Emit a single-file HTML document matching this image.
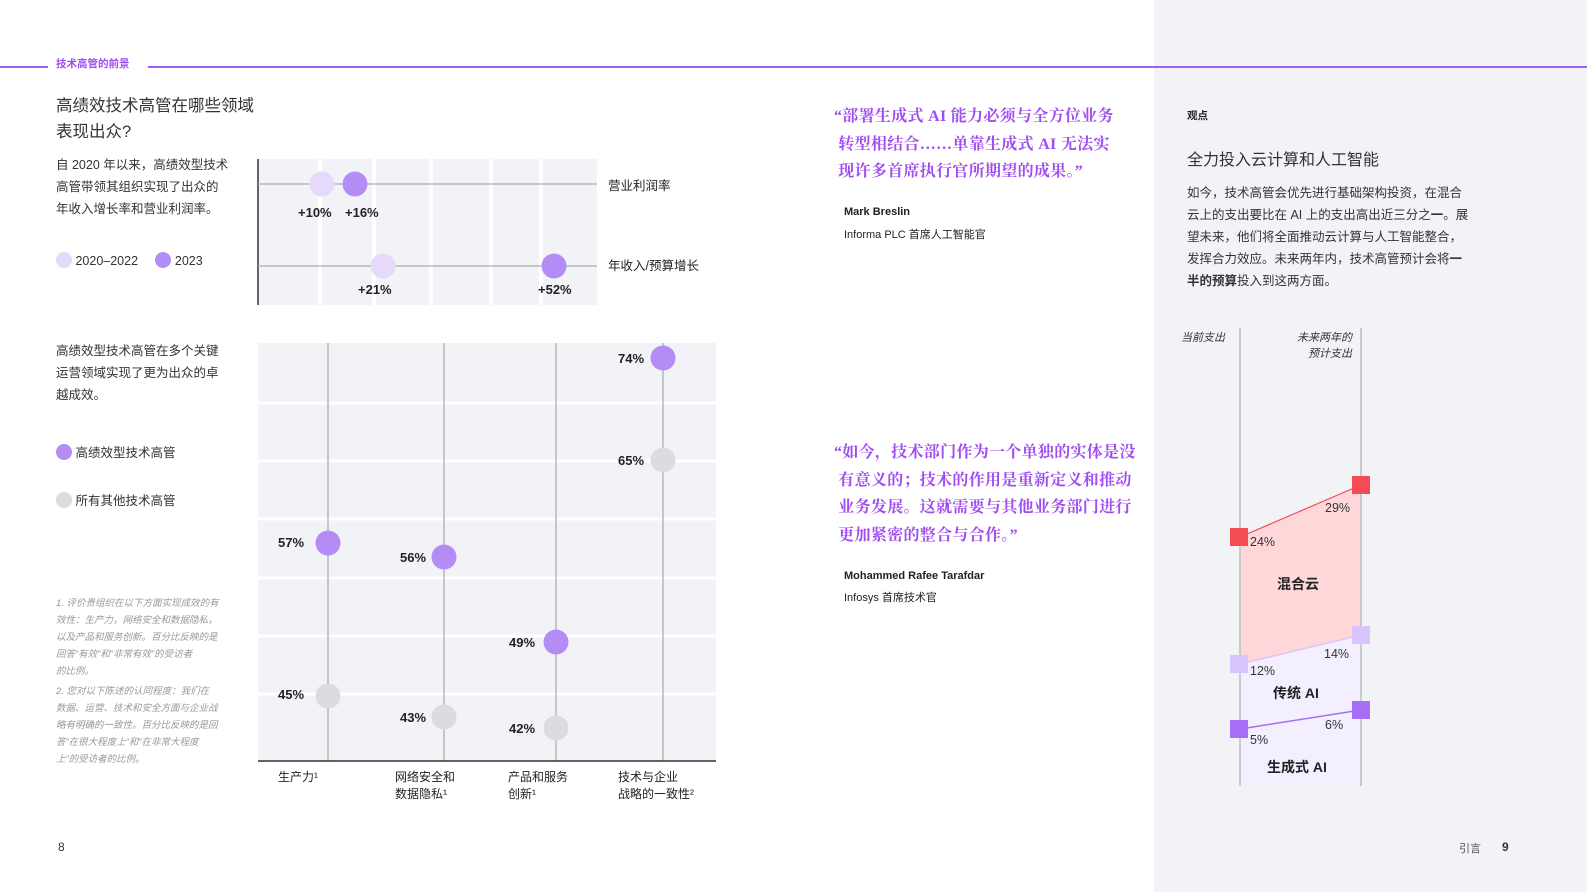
<!DOCTYPE html>
<html><head><meta charset="utf-8"><style>
*{margin:0;padding:0;box-sizing:border-box}
body{width:1587px;height:892px;position:relative;background:#fff;font-family:"Liberation Sans","Noto Sans CJK SC",sans-serif;color:#222;overflow:hidden}
.a{position:absolute}
.q{color:#a04cf0;font-family:"Liberation Serif","Noto Serif CJK SC",serif;font-size:16px;font-weight:bold;line-height:27.5px;white-space:nowrap;letter-spacing:0.3px}
.fn{font-size:9.5px;color:#999;font-style:italic;line-height:17px;white-space:nowrap}
</style></head><body>
<div class="a" style="left:1154px;top:0;width:433px;height:892px;background:#f2f3f7"></div>
<div class="a" style="left:0;top:66px;width:48px;height:1.5px;background:#a15cf0"></div>
<div class="a" style="left:148px;top:66px;width:1439px;height:1.5px;background:#a15cf0"></div>
<div class="a" style="left:56px;top:56px;font-size:10.5px;font-weight:bold;color:#a04cf0">技术高管的前景</div>

<div class="a" style="left:56px;top:93px;font-size:16.5px;line-height:26px;color:#333">高绩效技术高管在哪些领域<br>表现出众?</div>
<div class="a" style="left:56px;top:154px;font-size:12.5px;line-height:22px;color:#333">自 2020 年以来，高绩效型技术<br>高管带领其组织实现了出众的<br>年收入增长率和营业利润率。</div>
<div class="a" style="left:56px;top:252px;font-size:12.5px;color:#333"><span style="display:inline-block;width:16px;height:16px;border-radius:50%;background:#e6dafb;vertical-align:-3px"></span> 2020–2022 &nbsp; &nbsp; <span style="display:inline-block;width:16px;height:16px;border-radius:50%;background:#b48cf6;vertical-align:-3px"></span> 2023</div>

<svg class="a" style="left:0;top:0" width="1587" height="892">
<rect x="259" y="159" width="338" height="146" fill="#f2f3f6"/>
<g stroke="#fff" stroke-width="4"><line x1="320" y1="159" x2="320" y2="305"/><line x1="374" y1="159" x2="374" y2="305"/><line x1="431" y1="159" x2="431" y2="305"/><line x1="491" y1="159" x2="491" y2="305"/><line x1="541" y1="159" x2="541" y2="305"/></g>
<line x1="258" y1="159" x2="258" y2="305" stroke="#333" stroke-width="1.5"/>
<g stroke="#aaa" stroke-width="1.2"><line x1="258" y1="184" x2="597" y2="184"/><line x1="258" y1="266" x2="597" y2="266"/></g>
<circle cx="322" cy="184" r="12.5" fill="#e6dafb"/><circle cx="355" cy="184" r="12.5" fill="#b48cf6"/>
<circle cx="383" cy="266" r="12.5" fill="#e6dafb"/><circle cx="554" cy="266" r="12.5" fill="#b48cf6"/>
<g font-size="13" font-weight="bold" fill="#222"><text x="298" y="217">+10%</text><text x="345" y="217">+16%</text><text x="358" y="294">+21%</text><text x="538" y="294">+52%</text></g>
<g font-size="12.5" fill="#222" font-family="Liberation Sans,Noto Sans CJK SC,sans-serif"><text x="608" y="190">营业利润率</text><text x="608" y="270">年收入/预算增长</text></g>

<rect x="258" y="343" width="458" height="418" fill="#f2f3f6"/>
<g stroke="#fff" stroke-width="3"><line x1="258" y1="403" x2="716" y2="403"/><line x1="258" y1="461" x2="716" y2="461"/><line x1="258" y1="519" x2="716" y2="519"/><line x1="258" y1="578" x2="716" y2="578"/><line x1="258" y1="636" x2="716" y2="636"/><line x1="258" y1="694" x2="716" y2="694"/></g>
<g stroke="#b8b8bc" stroke-width="1.5"><line x1="328" y1="343" x2="328" y2="761"/><line x1="444" y1="343" x2="444" y2="761"/><line x1="556" y1="343" x2="556" y2="761"/><line x1="663" y1="343" x2="663" y2="761"/></g>
<line x1="258" y1="761" x2="716" y2="761" stroke="#333" stroke-width="1.5"/>
<g fill="#b48cf6"><circle cx="328" cy="543" r="12.5"/><circle cx="444" cy="557" r="12.5"/><circle cx="556" cy="642" r="12.5"/><circle cx="663" cy="358" r="12.5"/></g>
<g fill="#dcdce0"><circle cx="328" cy="696" r="12.5"/><circle cx="444" cy="717" r="12.5"/><circle cx="556" cy="728" r="12.5"/><circle cx="663" cy="460" r="12.5"/></g>
<g font-size="13" font-weight="bold" fill="#222"><text x="278" y="547">57%</text><text x="400" y="562">56%</text><text x="509" y="647">49%</text><text x="618" y="363">74%</text><text x="278" y="699">45%</text><text x="400" y="722">43%</text><text x="509" y="733">42%</text><text x="618" y="465">65%</text></g>
<g font-size="12" fill="#222" font-family="Liberation Sans,Noto Sans CJK SC,sans-serif"><text x="278" y="781">生产力¹</text><text x="395" y="781">网络安全和</text><text x="395" y="798">数据隐私¹</text><text x="508" y="781">产品和服务</text><text x="508" y="798">创新¹</text><text x="618" y="781">技术与企业</text><text x="618" y="798">战略的一致性²</text></g>

<polygon points="1240,537 1361,485 1361,635 1240,664" fill="#ffd7d9"/>
<polygon points="1240,664 1361,635 1361,786 1240,786" fill="#f3efff"/>
<g stroke="#bdbdc2" stroke-width="1.5"><line x1="1240" y1="328" x2="1240" y2="786"/><line x1="1361" y1="328" x2="1361" y2="786"/></g>
<line x1="1240" y1="537" x2="1361" y2="485" stroke="#f04e5a" stroke-width="1.2"/>
<line x1="1240" y1="664" x2="1361" y2="635" stroke="#d9c6fb" stroke-width="1.5"/>
<line x1="1240" y1="729" x2="1361" y2="710" stroke="#a66ff5" stroke-width="1.5"/>
<rect x="1230" y="528" width="18" height="18" fill="#f44b55"/><rect x="1352" y="476" width="18" height="18" fill="#f44b55"/>
<rect x="1230" y="655" width="18" height="18" fill="#d8c4fc"/><rect x="1352" y="626" width="18" height="18" fill="#d8c4fc"/>
<rect x="1230" y="720" width="18" height="18" fill="#a66ff5"/><rect x="1352" y="701" width="18" height="18" fill="#a66ff5"/>
<g font-size="12.5" fill="#333"><text x="1250" y="546">24%</text><text x="1325" y="512">29%</text><text x="1250" y="675">12%</text><text x="1324" y="658">14%</text><text x="1250" y="744">5%</text><text x="1325" y="729">6%</text></g>
<g font-size="14" font-weight="bold" fill="#222" font-family="Liberation Sans,Noto Sans CJK SC,sans-serif"><text x="1277" y="589">混合云</text><text x="1273" y="698">传统 AI</text><text x="1267" y="772">生成式 AI</text></g>
<g font-size="11" font-style="italic" fill="#333" font-family="Liberation Sans,Noto Sans CJK SC,sans-serif"><text x="1181" y="341">当前支出</text><text x="1352" y="341" text-anchor="end">未来两年的</text><text x="1352" y="357" text-anchor="end">预计支出</text></g>
</svg>

<div class="a" style="left:56px;top:340px;font-size:12.5px;line-height:22px;color:#333">高绩效型技术高管在多个关键<br>运营领域实现了更为出众的卓<br>越成效。</div>
<div class="a" style="left:56px;top:442px;font-size:12.5px;color:#333"><span style="display:inline-block;width:16px;height:16px;border-radius:50%;background:#b48cf6;vertical-align:-3px"></span> 高绩效型技术高管</div>
<div class="a" style="left:56px;top:490px;font-size:12.5px;color:#333"><span style="display:inline-block;width:16px;height:16px;border-radius:50%;background:#dcdce0;vertical-align:-3px"></span> 所有其他技术高管</div>
<div class="a fn" style="left:56px;top:595px">1. 评价贵组织在以下方面实现成效的有<br>效性：生产力，网络安全和数据隐私，<br>以及产品和服务创新。百分比反映的是<br>回答“有效”和“非常有效”的受访者<br>的比例。</div>
<div class="a fn" style="left:56px;top:683px">2. 您对以下陈述的认同程度：我们在<br>数据、运营、技术和安全方面与企业战<br>略有明确的一致性。百分比反映的是回<br>答“在很大程度上”和“在非常大程度<br>上”的受访者的比例。</div>
<div class="a" style="left:58px;top:840px;font-size:12px;color:#333">8</div>

<div class="a q" style="left:834px;top:103px">“部署生成式 AI 能力必须与全方位业务<br>&nbsp;转型相结合……单靠生成式 AI 无法实<br>&nbsp;现许多首席执行官所期望的成果。”</div>
<div class="a" style="left:844px;top:206px;font-size:11px;font-weight:bold">Mark Breslin</div>
<div class="a" style="left:844px;top:226px;font-size:11px">Informa PLC 首席人工智能官</div>
<div class="a q" style="left:834px;top:439px">“如今，技术部门作为一个单独的实体是没<br>&nbsp;有意义的；技术的作用是重新定义和推动<br>&nbsp;业务发展。这就需要与其他业务部门进行<br>&nbsp;更加紧密的整合与合作。”</div>
<div class="a" style="left:844px;top:570px;font-size:11px;font-weight:bold">Mohammed Rafee Tarafdar</div>
<div class="a" style="left:844px;top:589px;font-size:11px">Infosys 首席技术官</div>

<div class="a" style="left:1187px;top:108px;font-size:10.5px;font-weight:bold">观点</div>
<div class="a" style="left:1187px;top:146px;font-size:16px;color:#333">全力投入云计算和人工智能</div>
<div class="a" style="left:1187px;top:182px;font-size:12.5px;line-height:22px;color:#333;white-space:nowrap">如今，技术高管会优先进行基础架构投资，在混合<br>云上的支出要比在 AI 上的支出高出近三分之<b>一</b>。展<br>望未来，他们将全面推动云计算与人工智能整合，<br>发挥合力效应。未来两年内，技术高管预计会将<b>一</b><br><b>半的预算</b>投入到这两方面。</div>
<div class="a" style="left:1459px;top:840px;font-size:11px;color:#555">引言</div>
<div class="a" style="left:1502px;top:840px;font-size:12px;font-weight:bold;color:#333">9</div>
</body></html>
